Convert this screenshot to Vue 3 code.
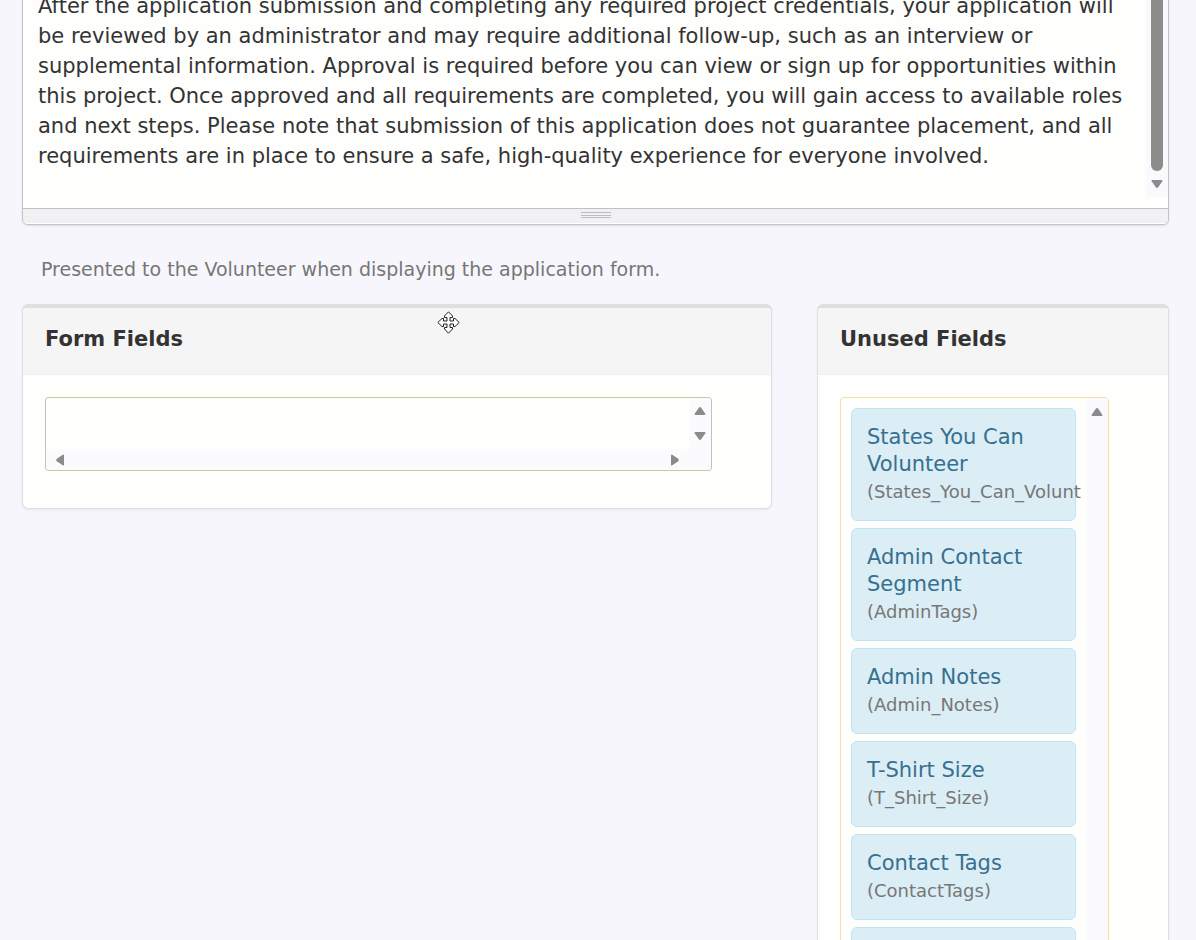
<script setup>
import { ref } from 'vue'

const description = ref(
  'After the application submission and completing any required project credentials, your application will be reviewed by an administrator and may require additional follow-up, such as an interview or supplemental information. Approval is required before you can view or sign up for opportunities within this project. Once approved and all requirements are completed, you will gain access to available roles and next steps. Please note that submission of this application does not guarantee placement, and all requirements are in place to ensure a safe, high-quality experience for everyone involved.'
)

const unusedFields = [
  { label: 'States You Can Volunteer', name: '(States_You_Can_Volunt' },
  { label: 'Admin Contact Segment', name: '(AdminTags)' },
  { label: 'Admin Notes', name: '(Admin_Notes)' },
  { label: 'T-Shirt Size', name: '(T_Shirt_Size)' },
  { label: 'Contact Tags', name: '(ContactTags)' },
  { label: '', name: '' }
]
</script>

<template>
  <main class="page">
    <section class="editor">
      <div class="editor-body">
        <textarea
          id="description"
          v-model="description"
          class="editor-text"
          aria-label="Application description"
          aria-describedby="description-help"
          spellcheck="false"
        ></textarea>
        <div class="editor-scroll" aria-hidden="true">
          <div class="thumb"></div>
          <svg class="arrow" viewBox="0 0 12 10"><path d="M1.500 1h9q1.500 0 .8 1.300L7.200 8.200q-1.200 1.400-2.400 0L.7 2.300Q0 1 1.500 1z" /></svg>
        </div>
      </div>
      <div class="grip" aria-hidden="true">
        <svg width="30" height="7" viewBox="0 0 30 7"><path d="M0 .5h30M0 3.500h30M0 5.500h30" /></svg>
      </div>
    </section>

    <p id="description-help" class="help">Presented to the Volunteer when displaying the application form.</p>

    <div class="columns">
      <section class="panel">
        <header class="panel-head">
          <h2>Form Fields</h2>
          <svg class="move" viewBox="0 0 23 23" aria-hidden="true">
            <path d="M11.500 .8 15.500 5v1.500H13V10h3.500V7.500H18l4.200 4-4.200 4h-1.500V13H13v3.500h2.500V18l-4 4.200-4-4.200v-1.500H10V13H6.500v2.500H5l-4.200-4 4.200-4h1.500V10H10V6.500H7.500V5z" />
          </svg>
        </header>
        <div class="panel-body">
          <div class="drop-zone">
            <div class="drop-area"></div>
            <div class="bar bar-v" aria-hidden="true">
              <svg class="arrow" viewBox="0 0 12 10"><path d="M1.500 9h9q1.500 0 .8-1.300L7.200 1.800q-1.200-1.400-2.400 0L.7 7.700Q0 9 1.500 9z" /></svg>
              <svg class="arrow" viewBox="0 0 12 10"><path d="M1.500 1h9q1.500 0 .8 1.300L7.200 8.200q-1.200 1.400-2.400 0L.7 2.300Q0 1 1.500 1z" /></svg>
            </div>
            <div class="bar bar-h" aria-hidden="true">
              <svg class="arrow side" viewBox="0 0 10 12"><path d="M9 1.500v9q0 1.500-1.300.8L1.800 7.200q-1.400-1.200 0-2.400L7.700.7Q9 0 9 1.500z" /></svg>
              <svg class="arrow side" viewBox="0 0 10 12"><path d="M1 1.500v9q0 1.500 1.300.8L8.200 7.200q1.400-1.200 0-2.400L2.300.7Q1 0 1 1.500z" /></svg>
            </div>
          </div>
        </div>
      </section>

      <section class="panel">
        <header class="panel-head">
          <h2>Unused Fields</h2>
        </header>
        <div class="panel-body">
          <div class="unused">
            <ul class="list">
              <li v-for="field in unusedFields" :key="field.name" class="item">
                <div class="label">{{ field.label }}</div>
                <div class="name">{{ field.name }}</div>
              </li>
            </ul>
            <div class="list-scroll" aria-hidden="true">
              <svg class="arrow" viewBox="0 0 12 10"><path d="M1.500 9h9q1.500 0 .8-1.300L7.200 1.800q-1.200-1.400-2.400 0L.7 7.700Q0 9 1.500 9z" /></svg>
            </div>
          </div>
        </div>
      </section>
    </div>
  </main>
</template>

<style>
body {
  margin: 0;
  background: #f6f6fc;
}
</style>

<style scoped>
* {
  box-sizing: border-box;
}

.page {
  height: 100vh;
  overflow: hidden;
  padding: 0 27px 0 22px;
  background: #f6f6fc;
  color: #333;
  font-family: "DejaVu Sans", Verdana, sans-serif;
  font-size: 21px;
}

.editor {
  margin-top: -16px;
  border: 1px solid #c4c4c8;
  border-radius: 6px;
  background: #fefefd;
  box-shadow: 0 1px 2px #dcdce4;
  overflow: hidden;
}

.editor-body {
  display: flex;
  height: 223px;
}

.editor-text {
  flex: 1;
  min-width: 0;
  padding: 6px 14px 7px 15px;
  border: 0;
  outline: 0;
  resize: none;
  overflow: hidden;
  background: transparent;
  color: #333;
  font: inherit;
  line-height: 30px;
}

.editor-scroll {
  display: flex;
  flex-direction: column;
  align-items: center;
  gap: 8px;
  width: 22px;
  height: 212px;
  background: #fafafd;
}

.thumb {
  width: 12px;
  height: 186px;
  border-radius: 6px;
  background: #8d8d8c;
}

.arrow {
  display: block;
  flex: none;
  width: 12px;
  height: 10px;
  fill: #8b8b8b;
}

.arrow.side {
  width: 10px;
  height: 12px;
}

.grip {
  display: flex;
  justify-content: center;
  height: 16px;
  padding-top: 3px;
  border-top: 1px solid #c0c0c4;
  background: #f1f1f4;
  box-shadow: inset 0 -1px #fff;
}

.grip path {
  stroke: #bdbdbf;
}

.help {
  margin: 31px 0 0;
  padding-left: 19px;
  color: #767676;
  font-size: 19px;
  line-height: 26px;
}

.columns {
  display: grid;
  grid-template-columns: 750fr 352fr;
  gap: 45px;
  align-items: start;
  margin-top: 22px;
}

.panel {
  min-width: 0;
  border: 1px solid #dedee6;
  border-top: 4px solid #dedfe0;
  border-radius: 6px;
  background: #fefefd;
  box-shadow: 0 1px 2px #e6e6ee;
}

.panel-head {
  position: relative;
  height: 67px;
  padding: 17px 22px;
  border-bottom: 1px solid #f0f0f2;
  border-radius: 3px 3px 0 0;
  background: #f5f5f5;
}

h2 {
  margin: 0;
  font-size: 21px;
  line-height: 28px;
}

.move {
  position: absolute;
  top: 3px;
  left: 414px;
  width: 23px;
  height: 23px;
  fill: #fff;
  stroke: #222;
}

.panel-body {
  padding: 22px 59px 37px 22px;
}

.drop-zone {
  display: grid;
  grid-template-columns: 1fr 22px;
  grid-template-rows: 51px 21px;
  border: 1px solid #b7d3a0;
  border-right-color: #c0c4be;
  border-left-color: #c0c4be;
  border-radius: 4px;
  overflow: hidden;
}

.bar {
  display: flex;
  align-items: center;
  background: #fbfbfd;
}

.bar-v {
  flex-direction: column;
  justify-content: space-between;
  padding: 8px 0;
}

.bar-h {
  grid-column: 1 / -1;
  justify-content: space-between;
  padding: 0 31px 0 9px;
}

.unused {
  display: flex;
  border: 1px solid #fae0a0;
  border-radius: 4px;
}

.list {
  flex: 1;
  min-width: 0;
  margin: 0;
  padding: 10px;
  overflow: hidden;
  list-style: none;
}

.item {
  min-height: 86px;
  margin-bottom: 7px;
  padding: 15px 15px 14px;
  border: 1px solid #bfe6f0;
  border-radius: 6px;
  background: #dbedf5;
}

.label {
  color: #36708f;
  line-height: 27px;
}

.name {
  color: #777;
  font-size: 18px;
  line-height: 28px;
  white-space: nowrap;
}

.list-scroll {
  display: flex;
  justify-content: center;
  width: 22px;
  padding-top: 9px;
  background: #fafafd;
}
</style>
